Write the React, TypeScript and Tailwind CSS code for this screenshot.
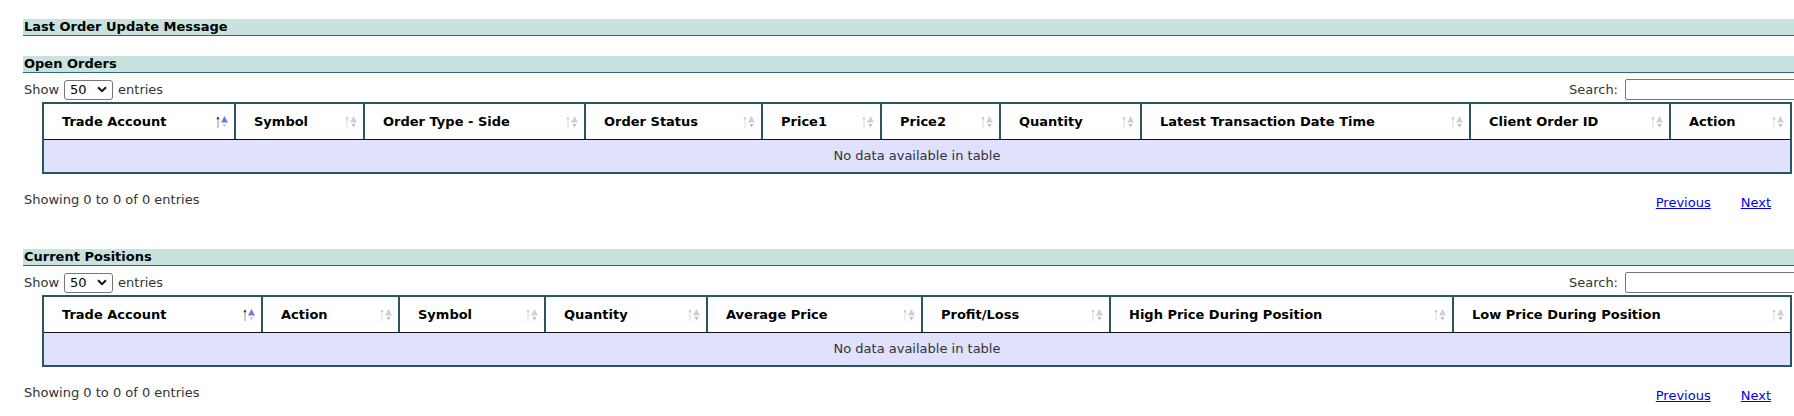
import type { ReactNode } from 'react';

interface Column {
  label: string;
  sorted?: boolean;
}

const openOrderColumns: Column[] = [
  { label: 'Trade Account', sorted: true },
  { label: 'Symbol' },
  { label: 'Order Type - Side' },
  { label: 'Order Status' },
  { label: 'Price1' },
  { label: 'Price2' },
  { label: 'Quantity' },
  { label: 'Latest Transaction Date Time' },
  { label: 'Client Order ID' },
  { label: 'Action' },
];

const positionColumns: Column[] = [
  { label: 'Trade Account', sorted: true },
  { label: 'Action' },
  { label: 'Symbol' },
  { label: 'Quantity' },
  { label: 'Average Price' },
  { label: 'Profit/Loss' },
  { label: 'High Price During Position' },
  { label: 'Low Price During Position' },
];

// datatables style sort marker: thin arrow + up/down triangles
function SortIcon({ active }: { active?: boolean }) {
  return (
    <svg width="13" height="14" viewBox="0 0 13 14" className="shrink-0">
      <line x1="2" y1="3" x2="2" y2="13" stroke={active ? '#b08a84' : '#e2d8d8'} strokeWidth="1" />
      <path d="M0.4 4.2 L2 1.2 L3.6 4.2 Z" fill={active ? '#333' : '#c8c8c8'} />
      <path d="M5 7.5 L8.5 1 L12 7.5 Z" fill={active ? '#7878dc' : '#cfcfcf'} />
      <path d="M6.5 9 L8.5 12.5 L10.5 9 Z" fill={active ? '#cfd0e4' : '#bdbdbd'} />
    </svg>
  );
}

function SectionBar({ children }: { children: ReactNode }) {
  return (
    <div className="h-[17px] pl-px bg-[#c8e3df] border-b border-[#2f6a7d] font-bold text-black leading-[16px]">
      {children}
    </div>
  );
}

function Controls() {
  return (
    <div className="mt-[6px] h-[21px] w-[1802px] flex items-center justify-between">
      <div className="flex items-center pl-px">
        <span>Show</span>
        <div className="mx-[5px] w-[49px] h-[20px] border border-[#767676] rounded-[3px] pl-[5px] pr-[5px] flex items-center justify-between text-black bg-white">
          <span className="leading-none">50</span>
          <svg width="10" height="7" viewBox="0 0 10 7">
            <path d="M1 1.2 L5 5.2 L9 1.2" fill="none" stroke="#111" strokeWidth="2" />
          </svg>
        </div>
        <span>entries</span>
      </div>
      <div className="flex items-center">
        <span>Search:</span>
        <input
          type="text"
          className="ml-[7px] w-[200px] h-[21px] border border-[#767676] rounded-[2px] bg-white outline-none"
        />
      </div>
    </div>
  );
}

function DataTable({ columns, gridCols }: { columns: Column[]; gridCols: string }) {
  return (
    <div className="mt-[2px] ml-[19px] w-[1750px] border-2 border-[#2b565f]">
      <div className={`grid ${gridCols} border-b border-[#111]`}>
        {columns.map((col, i) => (
          <div
            key={col.label}
            className={`h-[35px] pl-[18px] pr-[5px] flex items-center justify-between font-bold text-black bg-white ${
              i > 0 ? 'border-l-2 border-[#2b565f]' : ''
            }`}
          >
            <span className="whitespace-nowrap">{col.label}</span>
            <SortIcon active={col.sorted} />
          </div>
        ))}
      </div>
      <div className="h-[32px] bg-[#e0e1fc] flex items-center justify-center text-[#333]">
        No data available in table
      </div>
    </div>
  );
}

function TableFooter() {
  return (
    <div className="mt-[18px] h-[19px] w-[1748px] flex justify-between items-start leading-[16px]">
      <span className="pl-px">Showing 0 to 0 of 0 entries</span>
      <div className="pt-[3px] flex gap-[30px]">
        <a href="#" className="text-[#0000ee] underline">Previous</a>
        <a href="#" className="text-[#0000ee] underline">Next</a>
      </div>
    </div>
  );
}

export default function App() {
  return (
    <div className="w-full h-[416px] overflow-hidden bg-white text-[#333] text-[13px] font-['DejaVu_Sans',Verdana,sans-serif]">
      <div className="pt-[19px] pl-[23px] w-[1825px]">
        <SectionBar>Last Order Update Message</SectionBar>

        <div className="mt-[20px]">
          <SectionBar>Open Orders</SectionBar>
          <Controls />
          <DataTable
            columns={openOrderColumns}
            gridCols="grid-cols-[190px_129px_221px_177px_119px_119px_141px_329px_200px_121px]"
          />
          <TableFooter />
        </div>

        <div className="mt-[38px]">
          <SectionBar>Current Positions</SectionBar>
          <Controls />
          <DataTable
            columns={positionColumns}
            gridCols="grid-cols-[217px_137px_146px_162px_215px_188px_343px_338px]"
          />
          <TableFooter />
        </div>
      </div>
    </div>
  );
}
